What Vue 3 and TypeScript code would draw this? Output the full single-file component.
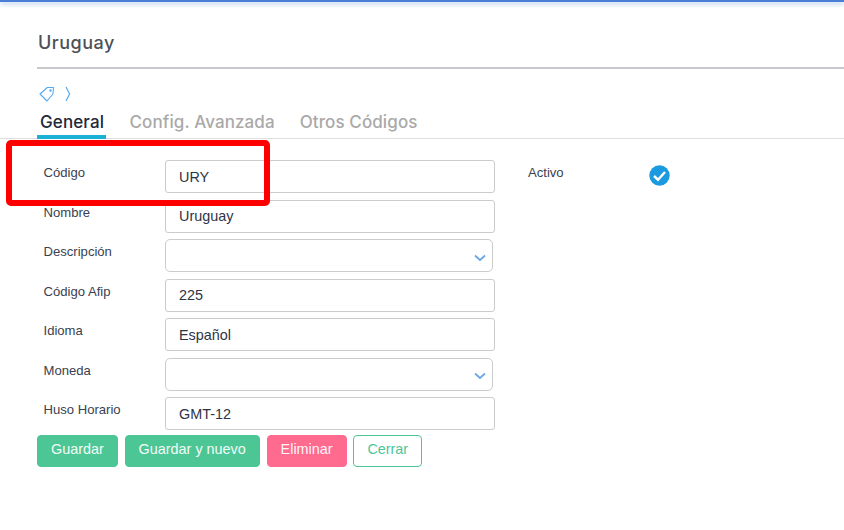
<template>
  <div class="page">
    <div class="top-bar"></div>
    <div class="content">
      <h1 class="title">{{ title }}</h1>
      <div class="crumbs">
        <svg width="16" height="16" viewBox="0 0 16 16" fill="none" stroke="#55aaf0" stroke-width="1.1">
          <path d="M1 8 8.3 1.5 14.5 1.5 14 8 8 15 Z" stroke-linejoin="round" />
          <circle cx="11.5" cy="4.5" r="0.7" />
        </svg>
        <svg class="crumb-arrow" width="6" height="16" viewBox="0 0 6 16" fill="none" stroke="#4aa5ee" stroke-width="1.1">
          <path d="M1 1 4.6 8 1 15" />
        </svg>
      </div>
      <div class="tabs">
        <div
          v-for="(tab, idx) in tabs"
          :key="tab"
          class="tab"
          :class="{ active: idx === 0 }"
        >
          {{ tab }}
        </div>
      </div>
      <div class="form">
        <div class="fields">
          <div v-for="field in fields" :key="field.label" class="row">
            <label class="label">{{ field.label }}</label>
            <div v-if="field.select" class="select">
              <svg width="12" height="8" viewBox="0 0 12 8" fill="none" stroke="#6aa6e6" stroke-width="1.7">
                <path d="M1 1.5 6 6 11 1.5" />
              </svg>
            </div>
            <input v-else class="input" type="text" :value="field.value" readonly />
          </div>
        </div>
        <div class="side">
          <span class="side-label">Activo</span>
          <svg width="21" height="21" viewBox="0 0 21 21">
            <circle cx="10.5" cy="10.5" r="10.2" fill="#1b9ae0" />
            <path d="M5 11 9 14.7 16 7" fill="none" stroke="#fff" stroke-width="2.4" />
          </svg>
        </div>
      </div>
      <div class="actions">
        <button class="btn green">Guardar</button>
        <button class="btn green">Guardar y nuevo</button>
        <button class="btn pink">Eliminar</button>
        <button class="btn outline">Cerrar</button>
      </div>
    </div>
    <div class="highlight"></div>
  </div>
</template>

<script setup lang="ts">
interface Field {
  label: string
  value?: string
  select?: boolean
}

const title = 'Uruguay'
const tabs = ['General', 'Config. Avanzada', 'Otros Códigos']
const fields: Field[] = [
  { label: 'Código', value: 'URY' },
  { label: 'Nombre', value: 'Uruguay' },
  { label: 'Descripción', select: true },
  { label: 'Código Afip', value: '225' },
  { label: 'Idioma', value: 'Español' },
  { label: 'Moneda', select: true },
  { label: 'Huso Horario', value: 'GMT-12' },
]
</script>

<style>
html,
body {
  margin: 0;
  background: #fff;
}
</style>

<style scoped>
.page {
  position: relative;
  width: 844px;
  height: 530px;
  overflow: hidden;
  background: #fff;
  font-family: "Liberation Sans", Arial, sans-serif;
}
.top-bar {
  height: 2px;
  background: #4a7fd6;
  box-shadow: 0 2px 4px rgba(74, 127, 214, 0.5);
}
.content {
  padding: 30px 0 0 37px;
}
.title {
  margin: 0;
  height: 35px;
  line-height: 22px;
  font-family: Inter, "Open Sans", sans-serif;
  font-size: 18px;
  font-weight: 500;
  letter-spacing: 0.5px;
  color: #4c5058;
  border-bottom: 2px solid #c9c9cd;
  padding-left: 1px;
}
.crumbs {
  display: flex;
  align-items: center;
  gap: 10px;
  height: 16px;
  margin-top: 17px;
  padding-left: 2px;
}
.tabs {
  display: flex;
  gap: 23px;
  height: 34px;
  margin-top: 3px;
  margin-left: -37px;
  padding-left: 37px;
  border-bottom: 1px solid #dfdfdf;
  box-sizing: border-box;
}
.tab {
  padding: 0 1px;
  height: 34px;
  box-sizing: border-box;
  line-height: 35px;
  font-family: Inter, "Open Sans", sans-serif;
  font-size: 17px;
  font-weight: 500;
  letter-spacing: 0.1px;
  color: #a9a9a9;
}
.tab.active {
  color: #22283a;
  border-bottom: 4px solid #1bb1d4;
  padding: 0 1.5px 0 3px;
}
.form {
  display: flex;
  margin-top: 21px;
}
.fields {
  width: 458px;
}
.row {
  display: flex;
  height: 39.5px;
}
.label {
  width: 128px;
  padding-left: 6.5px;
  box-sizing: border-box;
  font-size: 13.1px;
  line-height: 26px;
  color: #3a4150;
}
.input,
.select {
  height: 33px;
  box-sizing: border-box;
  border: 1px solid #cbcbcb;
  border-radius: 3px;
  background: #fff;
}
.input {
  width: 330px;
  padding: 0 13px;
  font-family: "Liberation Sans", Arial, sans-serif;
  font-size: 14.4px;
  color: #2e3445;
  outline: none;
}
.select {
  width: 328px;
  display: flex;
  align-items: center;
  justify-content: flex-end;
  padding: 4px 6px 0 0;
  border-radius: 5px;
}
.side {
  display: flex;
  align-items: flex-start;
  padding-left: 33px;
}
.side-label {
  width: 121px;
  font-size: 13.1px;
  line-height: 25px;
  color: #3a4150;
}
.side svg {
  margin-top: 5px;
}
.actions {
  display: flex;
  gap: 6.8px;
  margin-top: -2px;
}
.btn {
  height: 32px;
  padding: 0 13px 4px;
  border: 1px solid #4dc696;
  border-radius: 4px;
  font-family: "Liberation Sans", Arial, sans-serif;
  font-size: 14.4px;
}
.green {
  background: #4dc696;
  color: #f2fbf7;
}
.pink {
  background: #ff6b8f;
  border-color: #ff6b8f;
  color: #fff4f7;
}
.outline {
  background: #fff;
  color: #4dc696;
}
.highlight {
  position: absolute;
  left: 6px;
  top: 140px;
  width: 264px;
  height: 66px;
  box-sizing: border-box;
  border: 6px solid #ff0000;
  border-radius: 5px;
}
</style>
